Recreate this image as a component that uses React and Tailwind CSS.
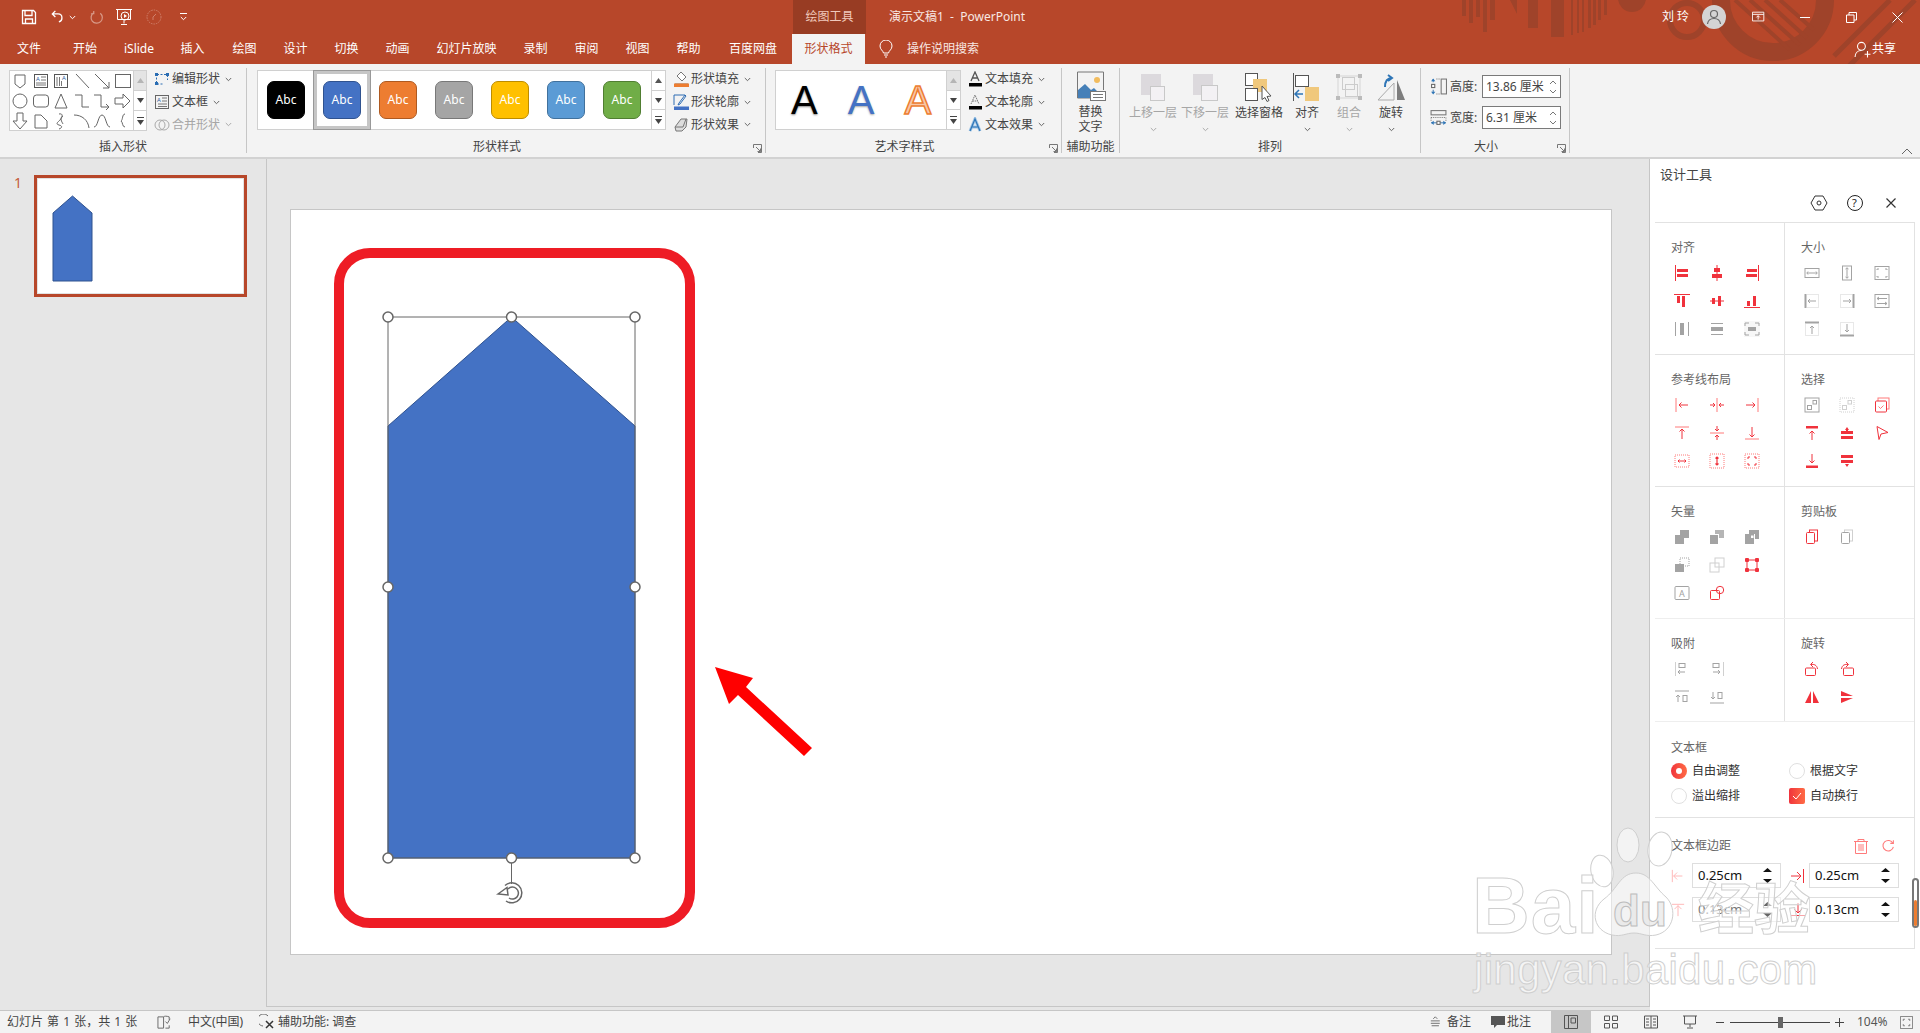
import React from 'react'

const RED = '#f0323c'
const PALE = '#ff7b7b'
const GRAY = '#a3a3a3'
const LIGHT = '#d0d0d0'

const TABS = [
  { t: '文件', w: 'w-[58px]' }, { t: '开始', w: 'w-[54px]' }, { t: 'iSlide', w: 'w-[54px]' },
  { t: '插入', w: 'w-[53px]' }, { t: '绘图', w: 'w-[51px]' }, { t: '设计', w: 'w-[51px]' },
  { t: '切换', w: 'w-[51px]' }, { t: '动画', w: 'w-[51px]' }, { t: '幻灯片放映', w: 'w-[87px]' },
  { t: '录制', w: 'w-[51px]' }, { t: '审阅', w: 'w-[51px]' }, { t: '视图', w: 'w-[51px]' },
  { t: '帮助', w: 'w-[51px]' }, { t: '百度网盘', w: 'w-[78px]' },
]

const SWATCHES = [
  'bg-[#000000] border-[#000000]', 'bg-[#4472c4] border-[#2f528f]', 'bg-[#ed7d31] border-[#ae5a21]',
  'bg-[#a5a5a5] border-[#787878]', 'bg-[#ffc000] border-[#bc8c00]', 'bg-[#5b9bd5] border-[#41719c]',
  'bg-[#70ad47] border-[#507e32]',
]

const Ico = ({ s = 16, h, vb, className = '', children, ...rest }) => (
  <svg width={s} height={h || s} viewBox={vb || '0 0 16 16'} fill="none" className={`shrink-0 ${className}`} {...rest}>{children}</svg>
)

const Chev = ({ c = '#666' }) => (
  <svg width="7" height="5" viewBox="0 0 7 5" fill="none" className="shrink-0"><path d="M.8 1l2.7 2.7L6.2 1" stroke={c} /></svg>
)

// small shapes in the insert-shape gallery
const GALLERY = [
  <path d="M4 3h10v9l-5 4-5-4z" />,
  <g><rect x="2.5" y="2.5" width="13" height="13" stroke="#555" /><text x="4" y="9" fontSize="6" fill="#2f5f9e" stroke="none">A</text><path d="M9 5h5M9 8h5M4 11h10M4 13h10" stroke="#777" /></g>,
  <g><rect x="2.5" y="2.5" width="13" height="13" stroke="#555" /><text x="10" y="8" fontSize="6" fill="#2f5f9e" stroke="none">A</text><path d="M5 5v9M7.500 5v9M9.500 9v5" stroke="#777" /></g>,
  <path d="M3 2l13 14" />,
  <path d="M2 2l14 14M16 10v6h-6" />,
  <rect x="1.500" y="2.500" width="15" height="13" />,
  <circle cx="9" cy="9" r="7" />,
  <rect x="1.500" y="3" width="15" height="12" rx="3" />,
  <path d="M9 2l6 14H3z" />,
  <path d="M2 3h7v12h7" />,
  <path d="M1 3h7v12h8M13 12l3 3-3 3" />,
  <path d="M1 6h8V2l7 7-7 7v-4H1z" />,
  <path d="M6 1h6v8h4l-7 8-7-8h4z" />,
  <path d="M3 3h6l6 6v7H3z" />,
  <path d="M7 2c5-1 3 4 1 6s-5 4-1 5 3 3 0 4M11 4c-4 2-1 6 0 8" />,
  <path d="M1 3c8 0 14 5 15 13" />,
  <path d="M1 15C5 15 5 3 9 3s4 12 8 12" />,
  <path d="M11 2C8 2 9 8 7 9c2 1 1 6 4 6" />,
]

const ScrollCol = ({ first = true }) => (
  <div className="w-[14px] flex flex-col border-l border-[#d0d0d0]">
    <div className={`flex-1 flex items-center justify-center ${first ? 'bg-[#e4e4e4]' : ''}`}>
      <svg width="7" height="5" viewBox="0 0 7 5"><path d="M3.500 0L7 5H0z" fill={first ? '#b5b5b5' : '#555'} /></svg>
    </div>
    <div className="flex-1 flex items-center justify-center border-t border-[#d0d0d0]">
      <svg width="7" height="5" viewBox="0 0 7 5"><path d="M0 0h7L3.500 5z" fill="#444" /></svg>
    </div>
    <div className="flex-1 flex flex-col gap-[2px] items-center justify-center border-t border-[#d0d0d0]">
      <div className="w-[7px] h-px bg-[#444]" />
      <svg width="7" height="5" viewBox="0 0 7 5"><path d="M0 0h7L3.500 5z" fill="#444" /></svg>
    </div>
  </div>
)

const SideBtn = ({ icon, label, off }) => (
  <div className={`flex-1 flex items-center ${off ? 'text-[#a6a6a6]' : 'text-[#444]'}`}>
    <div className="w-[18px] flex justify-center shrink-0">{icon}</div>
    <span className="ml-[1px] whitespace-nowrap">{label}</span>
    <span className="ml-[5px]"><Chev c={off ? '#aaa' : '#666'} /></span>
  </div>
)

const Group = ({ w, label, labelCls = '', launcher, children }) => (
  <div className={`relative h-full flex flex-col border-r border-[#c6c6c6] shrink-0 ${w}`}>
    <div className="h-[72px] shrink-0 flex">{children}</div>
    <div className={`h-[14px] shrink-0 leading-[14px] text-center text-[#444] whitespace-nowrap ${labelCls}`}>{label}</div>
    {launcher && (
      <svg width="9" height="9" viewBox="0 0 9 9" fill="none" className="absolute right-[3px] bottom-[0px]">
        <path d="M.5 4V.5H8.500V8.500H5M3 3l4.500 4.500M7.500 4.500v3h-3" stroke="#777" />
      </svg>
    )}
  </div>
)

const BigBtn = ({ w, icon, label, off, chev = true }) => (
  <div className={`flex flex-col items-center ${w} ${off ? 'text-[#a6a6a6]' : 'text-[#444]'}`}>
    <div className="h-[32px] mt-[3px] flex items-center justify-center">{icon}</div>
    <div className="h-[17px] mt-[1px] leading-[17px] whitespace-nowrap">{label}</div>
    {chev && <div className="mt-[6px]"><Chev c={off ? '#aaa' : '#666'} /></div>}
  </div>
)

const SizeRow = ({ icon, label, value }) => (
  <div className="h-[23px] flex items-center">
    <div className="w-[21px] ml-[7px] flex justify-center">{icon}</div>
    <span className="ml-[1px] w-[32px] text-[#444]">{label}</span>
    <div className="w-[79px] h-[23px] border border-[#7a7a7a] bg-white flex items-center justify-between pl-[3px] pr-[3px]">
      <span className="text-[#444] whitespace-nowrap">{value}</span>
      <svg width="8" height="16" viewBox="0 0 8 16" fill="none"><path d="M1 5l3-3 3 3M1 11l3 3 3-3" stroke="#777" /></svg>
    </div>
  </div>
)

const Line = ({ d, c, w = 1 }) => <path d={d} stroke={c} strokeWidth={w} />
const Box = ({ x, y, w, h, c, dash }) => <rect x={x} y={y} width={w} height={h} stroke={c} strokeDasharray={dash} />

const ALIGN = [
  <g><Line d="M1.500 0v16" c={RED} /><path d="M3 4h11v3H3zM3 9h11v3H3z" fill={RED} /></g>,
  <g><Line d="M8 0v16" c={RED} /><path d="M5 3h6v4H5zM3 9h10v4H3z" fill={RED} /></g>,
  <g><Line d="M14.500 0v16" c={RED} /><path d="M3 4h10v3H3zM2 9h11v3H2z" fill={RED} /></g>,
  <g><Line d="M0 1.500h16" c={RED} /><path d="M3 3h3v7H3zM8 3h3v11H8z" fill={RED} /></g>,
  <g><Line d="M1 8h14" c={RED} /><path d="M3 5h3v6H3zM9 3h3v10H9z" fill={RED} /></g>,
  <g><Line d="M0 14.500h16" c={RED} /><path d="M3 8h3v5H3zM9 3h3v10H9z" fill={RED} /></g>,
  <g><Line d="M1.500 1v14M14.500 1v14" c={GRAY} /><path d="M6 2h4v12H6z" fill={GRAY} /></g>,
  <g><Line d="M2 2.500h12M2 13.500h12" c={GRAY} /><path d="M2 6h12v4H2z" fill={GRAY} /></g>,
  <g><rect x="-3" y="-3" width="22" height="22" rx="2" fill="#f7f7f7" /><path d="M1 5V2h4M11 2h4v3M1 11v3h4M11 14h4v-3" stroke={GRAY} /><path d="M4 6h8v4H4z" fill={GRAY} /></g>,
]
const SIZE = [
  <g><Box x="1" y="3.500" w="14" h="9" c={GRAY} /><Line d="M3 8h10M4 6.500L2.800 8 4 9.500M12 6.500L13.200 8 12 9.500" c={GRAY} /></g>,
  <g><Box x="3.500" y="1" w="9" h="14" c={GRAY} /><Line d="M8 3v10M6.500 4L8 2.800 9.500 4M6.500 12L8 13.200 9.500 12" c={GRAY} /></g>,
  <g><Box x="1" y="1.500" w="14" h="13" c={GRAY} /><Line d="M3 5V4h2M11 4h2v1M3 11v1h2M11 12h2v-1" c={GRAY} /></g>,
  <g><Line d="M1.500 1v14" c={GRAY} w="2" /><Box x="2.500" y="1.500" w="12" h="13" c={LIGHT} dash="1 1" /><Line d="M4 8h8M6 6L4 8l2 2" c={GRAY} /></g>,
  <g><Line d="M14.500 1v14" c={GRAY} w="2" /><Box x="1.500" y="1.500" w="12" h="13" c={LIGHT} dash="1 1" /><Line d="M4 8h8M10 6l2 2-2 2" c={GRAY} /></g>,
  <g><Box x="1" y="1.500" w="14" h="13" c={GRAY} /><Line d="M3 5.500h10M3 10.500h10M5 4L3 5.500 5 7M11 9l2 1.500L11 12" c={GRAY} /></g>,
  <g><Line d="M1 1.500h14" c={GRAY} w="2" /><Box x="1.500" y="2.500" w="13" h="12" c={LIGHT} dash="1 1" /><Line d="M8 13V5M6 7l2-2 2 2" c={GRAY} /></g>,
  <g><Line d="M1 14.500h14" c={GRAY} w="2" /><Box x="1.500" y="1.500" w="13" h="12" c={LIGHT} dash="1 1" /><Line d="M8 3v8M6 9l2 2 2-2" c={GRAY} /></g>,
]
const GUIDE = [
  <g><Line d="M2 1v14" c={PALE} /><Line d="M5 8h9M7.500 5.500L5 8l2.500 2.500" c={RED} /></g>,
  <g><Line d="M8 1v14" c={PALE} /><Line d="M1 8h5M4 6l2 2-2 2M15 8h-5M12 6l-2 2 2 2" c={RED} /></g>,
  <g><Line d="M14 1v14" c={PALE} /><Line d="M2 8h9M8.500 5.500L11 8l-2.500 2.500" c={RED} /></g>,
  <g><Line d="M1 2h14" c={PALE} /><Line d="M8 4v10M5.500 6.500L8 4l2.500 2.500" c={RED} /></g>,
  <g><Line d="M1 8h14" c={PALE} /><Line d="M8 1v5M6 4l2 2 2-2M8 15v-5M6 12l2-2 2 2" c={RED} /></g>,
  <g><Line d="M1 14h14" c={PALE} /><Line d="M8 2v10M5.500 9.500L8 12l2.500-2.500" c={RED} /></g>,
  <g><Box x="1" y="2" w="14" h="12" c={PALE} dash="1 1" /><Line d="M4 8h8M5.500 6.500L4 8l1.500 1.500M10.500 6.500L12 8l-1.500 1.500" c={RED} /></g>,
  <g><Box x="1" y="1" w="14" h="14" c={PALE} dash="1 1" /><Line d="M8 4v8M6.500 5.500L8 4l1.500 1.500M6.500 10.500L8 12l1.500-1.500" c={RED} w="1.200" /></g>,
  <g><Box x="1" y="1" w="14" h="14" c={PALE} dash="1 1" /><Line d="M4 6V4h2M10 4h2v2M4 10v2h2M10 12h2v-2" c={RED} /></g>,
]
const SELECT = [
  <g><Box x="1" y="1" w="14" h="14" c={GRAY} /><Box x="3.500" y="8.500" w="4" h="4" c={GRAY} /><Box x="9" y="3.500" w="3.500" h="3.500" c={GRAY} /></g>,
  <g><Box x="1" y="1" w="14" h="14" c={LIGHT} dash="1 1" /><Box x="3.500" y="8.500" w="4" h="4" c={LIGHT} /><Box x="9" y="3.500" w="3.500" h="3.500" c={LIGHT} /></g>,
  <g><Box x="4" y="1" w="11" h="11" c={PALE} /><rect x="1.500" y="4" width="11" height="11" rx="1" fill="#fff" stroke={RED} /><Line d="M4.500 9.500l2 2 3-3" c={PALE} /></g>,
  <g><path d="M2 1h12v2.500H2z" fill={RED} /><Line d="M8 15V6M5.500 8.500L8 6l2.500 2.500" c={RED} /></g>,
  <g><path d="M2 6h12v3H2zM2 11h12v3H2z" fill={RED} /><path d="M6 5l2-3 2 3z" fill={RED} /><path d="M7 4h2v3H7z" fill={RED} /></g>,
  <path d="M3 1.500L14 7.500 7 9 5 14.500z" stroke={RED} />,
  <g><path d="M2 12.500h12V15H2z" fill={RED} /><Line d="M8 1v9M5.500 7.500L8 10l2.500-2.500" c={RED} /></g>,
  <g><path d="M2 2h12v3H2zM2 7h12v3H2z" fill={RED} /><path d="M6 11h4l-2 3z" fill={RED} /></g>,
]
const VECTOR = [
  <path d="M6 1h9v8h-5v6H1V6h5z" fill={GRAY} />,
  <g><path d="M1 6h8v9H1z" fill={GRAY} /><path d="M6 1h9v8H10V5H6z" fill="#b5b5b5" /></g>,
  <g><path d="M1 5h9v10H1z" fill={GRAY} /><path d="M5 1h10v9H11V5H5z" fill={GRAY} /><rect x="7" y="6.500" width="2.500" height="2.500" fill="#fff" /></g>,
  <g><path d="M1 7h9v8H1z" fill={GRAY} /><Box x="6" y="1" w="9" h="8" c={GRAY} dash="1 1" /></g>,
  <g><Box x="1" y="6" w="9" h="9" c={LIGHT} /><Box x="6" y="1" w="9" h="9" c={LIGHT} /></g>,
  <g><Box x="3" y="3" w="10" h="10" c={RED} />{[[3, 3], [13, 3], [3, 13], [13, 13]].map(([x, y]) => <rect key={x + '' + y} x={x - 2} y={y - 2} width="4" height="4" rx="1" fill={RED} />)}</g>,
  <g><rect x="1" y="1.500" width="14" height="13" rx="1" stroke={GRAY} /><text x="5" y="11.500" fontSize="9" fill={GRAY}>A</text></g>,
  <g><rect x="1.500" y="5.500" width="9" height="9" rx="1" stroke={RED} fill="#fff" /><circle cx="11" cy="5" r="3.700" stroke={RED} /></g>,
]
const CLIP = [
  <g><Box x="5.500" y="1" w="8" h="11" c={RED} /><rect x="2.500" y="3.500" width="8" height="11" rx="1" fill="#fff" stroke={RED} /></g>,
  <g><Box x="5.500" y="1" w="8" h="11" c={LIGHT} /><rect x="2.500" y="3.500" width="8" height="11" rx="1" fill="#fff" stroke={GRAY} /></g>,
]
const SNAP = [
  <g><Line d="M1.500 1v14" c={LIGHT} /><Box x="5" y="2.500" w="6" h="4" c={GRAY} /><Line d="M4 11h7M6 9l-2 2 2 2" c={GRAY} /></g>,
  <g><Line d="M14.500 1v14" c={LIGHT} /><Box x="4" y="2.500" w="6" h="4" c={GRAY} /><Line d="M4 11h7M9 9l2 2-2 2" c={GRAY} /></g>,
  null,
  <g><Line d="M1 2h14" c={GRAY} /><Line d="M4 13V6M2 8l2-2 2 2" c={GRAY} /><Box x="9" y="6.500" w="4" h="6" c={GRAY} /></g>,
  <g><Line d="M1 14h14" c={GRAY} /><Line d="M4 3v7M2 8l2 2 2-2" c={GRAY} /><Box x="9" y="3.500" w="4" h="6" c={GRAY} /></g>,
]
const ROTATE = [
  <g><rect x="1.500" y="7" width="10" height="7.500" rx="1" stroke={RED} /><Line d="M13.500 8C13 4 10 3 7 3.500M9 1L6.500 3.500 9 6" c={RED} /></g>,
  <g><rect x="4.500" y="7" width="10" height="7.500" rx="1" stroke={RED} /><Line d="M2.500 8C3 4 6 3 9 3.500M7 1l2.500 2.500L7 6" c={RED} /></g>,
  null,
  <path d="M7 2v12H1zM9 2v12h6z" fill={RED} />,
  <path d="M2 2l12 5H2zM2 9h12L2 14z" fill={RED} />,
]

const IconGrid = ({ items }) => (
  <div className="grid grid-cols-[35px_35px_35px] auto-rows-[28px] mt-[3px] ml-[9.500px]">
    {items.map((it, i) => (
      <div key={i} className="flex items-center justify-center">{it && <Ico>{it}</Ico>}</div>
    ))}
  </div>
)

const Section = ({ title, items, right }) => (
  <div className={`h-full ${right ? '' : 'border-r border-[#e2e2e2]'}`}>
    <div className="pt-[17px] pl-[16px] h-[33px] leading-[16px] text-[#666]">{title}</div>
    <IconGrid items={items} />
  </div>
)

const Radio = ({ on, label }) => (
  <div className="flex items-center h-[25px]">
    {on ? (
      <div className="w-[16px] h-[16px] rounded-full bg-gradient-to-r from-[#f0323c] to-[#ff6a45] flex items-center justify-center"><div className="w-[6px] h-[6px] rounded-full bg-white" /></div>
    ) : <div className="w-[16px] h-[16px] rounded-full border border-[#e0e0e0] bg-white" />}
    <span className="ml-[5px] text-[#333] whitespace-nowrap">{label}</span>
  </div>
)

const Spin = ({ value, faded }) => (
  <div className="h-[25px] border border-[#dedede] flex items-center justify-between pl-[5px] pr-[8px]">
    <span className={`text-[13px] ${faded ? 'text-[#777]' : 'text-[#111]'}`}>{value}</span>
    <svg width="9" height="15" viewBox="0 0 9 15"><path d="M4.500 0L9 4H0zM0 11h9l-4.500 4z" fill={faded ? '#666' : '#111'} /></svg>
  </div>
)

const Cell = ({ w, children, className = '' }) => (
  <div className={`h-full flex items-center justify-center shrink-0 ${w} ${className}`}>{children}</div>
)

const TitleDecor = () => {
  const bars = [[1462, 4, 16], [1469, 4, 23], [1476, 4, 17], [1483, 4, 32], [1490, 5, 20], [1528, 10, 28], [1551, 13, 37], [1571, 2, 35], [1577, 2, 33], [1582, 2, 32], [1588, 3, 28], [1593, 3, 25], [1598, 3, 20], [1604, 3, 15]]
  return (
    <svg width="480" height="64" viewBox="1440 0 480 64" className="absolute top-0 right-0">
      <g fill="#9f432a">
        {bars.map(([x, w, h]) => <rect key={x} x={x} y="0" width={w} height={h} />)}
        <path d="M1510 0h7v14z" />
        <circle cx="1632" cy="-2" r="14" />
      </g>
      <g fill="none" stroke="#9f432a">
        <circle cx="1687" cy="20" r="17" strokeWidth="6" />
        <circle cx="1773" cy="0" r="52" strokeWidth="18" />
        <path d="M1735 0l55 50M1750 0l50 45M1765 0l42 38M1780 0l34 30" strokeWidth="4" />
        <path d="M1890 0l-56 56M1915 0l-66 66" strokeWidth="5" />
      </g>
    </svg>
  )
}

const QuickAccess = () => (
  <div className="w-[793px] shrink-0 flex items-center h-full pl-[21px]">
    <Ico><path d="M1.500 1.500h11l2 2v11h-13zM4 1.500v5h7v-5M4.500 14.500V10h7v4.500" stroke="#fff" strokeWidth="1.300" /></Ico>
    <Ico className="ml-[14px]" s={14}><path d="M5 1L1.500 4.500 5 8M2 4.500h6c3.500 0 4.500 2.500 4.500 4.500s-1.500 4-3.500 4.500" stroke="#fff" strokeWidth="1.500" /></Ico>
    <span className="ml-[4px]"><Chev c="#fff" /></span>
    <Ico className="ml-[14px]" s={15}><path d="M11 3.500A6 6 0 1 1 4 3M4 1v3H1" stroke="#d89a88" strokeWidth="1.300" /></Ico>
    <Ico className="ml-[10px]" s={18} vb="0 0 18 18"><path d="M1 1.500h16M2.500 1.500v10h13v-10M9 11.500v4M6 16.500h6" stroke="#fff" /><circle cx="10" cy="8" r="4" stroke="#fff" /><path d="M9 6l3 2-3 2z" fill="#fff" /></Ico>
    <Ico className="ml-[13px]" s={16}><circle cx="8" cy="8" r="7" stroke="#d0806b" strokeDasharray="1.500 1" /><path d="M10 5L7 8v3" stroke="#d0806b" /></Ico>
    <span className="ml-[18px] flex flex-col items-center gap-[2px]"><span className="block w-[7px] h-px bg-white" /><Chev c="#fff" /></span>
  </div>
)

const RibbonTop = () => (
  <div className="relative h-[64px] shrink-0 bg-[#b7472a] text-white">
    <TitleDecor />
    <div className="relative h-[34px] flex items-center">
      <QuickAccess />
      <div className="w-[73px] h-full bg-[#983c23] flex items-center justify-center text-[#f0c9bc]">绘图工具</div>
      <div className="ml-[23px] whitespace-pre text-[#f8e8e3]">演示文稿1  -  PowerPoint</div>
      <div className="ml-auto h-full flex items-center">
        <span className="w-[31px] tracking-[3px] whitespace-nowrap">刘玲</span>
        <div className="ml-[9px] w-[24px] h-[24px] rounded-full bg-[#d4d4d4] flex items-center justify-center">
          <Ico s={16}><circle cx="8" cy="5" r="3.500" stroke="#666" strokeWidth="1.200" /><path d="M1.500 15c.5-4 3-5.500 6.500-5.500s6 1.500 6.500 5.500" stroke="#666" strokeWidth="1.200" /></Ico>
        </div>
        <Cell w="w-[46px] ml-[10px]"><Ico s={14}><path d="M.5 2.500h13v10H.5zM.5 5h13M7 11V6.500M5 8.500l2-2 2 2" stroke="#fff" /></Ico></Cell>
        <Cell w="w-[46px]"><div className="w-[10px] h-px bg-white" /></Cell>
        <Cell w="w-[46px]"><Ico s={11} vb="0 0 11 11"><path d="M.5 3h7.500v7.500H.5zM3 3V.5h7.500V8H8" stroke="#fff" /></Ico></Cell>
        <Cell w="w-[46px]"><Ico s={11} vb="0 0 11 11"><path d="M.5.5l10 10M10.500.5l-10 10" stroke="#fff" /></Ico></Cell>
      </div>
    </div>
    <div className="relative h-[30px] flex items-stretch">
      {TABS.map((t) => <div key={t.t} className={`${t.w} flex items-center justify-center whitespace-nowrap`}>{t.t}</div>)}
      <div className="w-[73px] bg-[#f3f3f3] text-[#b7472a] flex items-center justify-center">形状格式</div>
      <div className="ml-[14px] flex items-center">
        <Ico s={14} h={18} vb="0 0 14 18"><path d="M4.500 13C4 10.500 1 9.500 1 6a6 6 0 0 1 12 0c0 3.500-3 4.500-3.500 7zM5 15h4M6 17h2" stroke="#fff" /></Ico>
        <span className="ml-[14px] text-[#f8e8e3]">操作说明搜索</span>
      </div>
      <div className="ml-auto mr-[24px] flex items-center">
        <Ico s={17}><circle cx="7" cy="5" r="3.700" stroke="#fff" /><path d="M1 15c0-3.500 2.500-6 6-6M10 12.500h5.500M12.700 9.500v6" stroke="#fff" /></Ico>
        <span className="ml-[1px]">共享</span>
      </div>
    </div>
  </div>
)

const Ribbon = () => (
  <div className="relative h-[95px] shrink-0 bg-[#f3f3f3] border-b-2 border-[#d2d2d2] py-[4px] flex">
    <Group w="w-[247px]" label="插入形状">
      <div className="ml-[9px] mt-[2px] w-[138px] h-[61px] bg-white border border-[#d0d0d0] flex">
        <div className="grid grid-cols-[20.500px_20.500px_20.500px_20.500px_20.500px_20.500px] auto-rows-[20px] w-[124px]">
          {GALLERY.map((g, i) => (
            <div key={i} className="flex items-center justify-center">
              <Ico s={18} vb="0 0 18 18" stroke="#666">{g}</Ico>
            </div>
          ))}
        </div>
        <ScrollCol />
      </div>
      <div className="ml-[6px] h-[68px] flex flex-col">
        <SideBtn label="编辑形状" icon={<Ico><path d="M3 3.500h10M3 13h6M2.500 3v10M13.500 4v5" stroke="#2a6db3" strokeDasharray="2 1.500" /><rect x="1" y="2" width="3" height="3" fill="#2a6db3" /><rect x="12" y="2" width="3" height="3" fill="#2a6db3" /><rect x="1" y="11" width="3" height="3" fill="#2a6db3" /></Ico>} />
        <SideBtn label="文本框" icon={<Ico><rect x="1.500" y="1.500" width="13" height="13" stroke="#666" /><text x="3" y="8" fontSize="6" fill="#2f5f9e">A</text><path d="M8 4h5M8 7h5M4 10h9M4 12.500h9" stroke="#777" /></Ico>} />
        <SideBtn off label="合并形状" icon={<Ico><circle cx="6" cy="8" r="5" stroke="#aaa" /><circle cx="10" cy="8" r="5" stroke="#aaa" /></Ico>} />
      </div>
    </Group>

    <Group w="w-[519px]" label="形状样式" labelCls="pr-[18px]" launcher>
      <div className="ml-[10px] mt-[2px] w-[409px] h-[60px] bg-white border border-[#d0d0d0] flex">
        {SWATCHES.map((s, i) => (
          <div key={s} className={`w-[56px] h-full flex items-center justify-center ${i === 1 ? 'border-[3px] border-[#c6c6c6] shadow-[0_0_0_1px_#999]' : ''}`}>
            <div className={`w-[38px] h-[38px] rounded-[7px] border flex items-center justify-center text-white ${s}`}>Abc</div>
          </div>
        ))}
        <div className="w-[1px]" />
        <ScrollCol first={false} />
      </div>
      <div className="ml-[6px] h-[68px] flex flex-col">
        <SideBtn label="形状填充" icon={<Ico><path d="M8 1l5 5-4 4-5-5zM2 13h13v3H2z" fill="#fff" stroke="#777" /><path d="M1 12.500h15V16H1z" fill="#ed7d31" /></Ico>} />
        <SideBtn label="形状轮廓" icon={<Ico><path d="M1 1h11M1 1v10M13 2l-6 8-2 1 1-2 6-8z" stroke="#2f6db3" /><path d="M1 12.500h15V16H1z" fill="#4472c4" /></Ico>} />
        <SideBtn label="形状效果" icon={<Ico><path d="M2 10l6-8h6l-1 8-4 4H3z" fill="#ddd" stroke="#777" /><path d="M2 10h8l3-8" stroke="#777" /></Ico>} />
      </div>
    </Group>

    <Group w="w-[296px]" label="艺术字样式" labelCls="pr-[18px]" launcher>
      <div className="ml-[9px] mt-[2px] w-[186px] h-[60px] bg-white border border-[#d0d0d0] flex">
        {[
          'text-black [text-shadow:0_1px_2px_#888]',
          'text-[#4472c4] [text-shadow:0_1px_2px_#aaa]',
          'text-[#f8c7a8] [-webkit-text-stroke:1.500px_#ed7d31]',
        ].map((c) => (
          <div key={c} className={`w-[57px] flex items-center justify-center text-[40px] leading-none [font-family:'Liberation_Sans',sans-serif] ${c}`}>A</div>
        ))}
        <ScrollCol />
      </div>
      <div className="ml-[5px] h-[68px] flex flex-col">
        <SideBtn label="文本填充" icon={<Ico><path d="M4 10l4-9 4 9M5.500 7h5" stroke="#555" strokeWidth="1.300" /><path d="M2 12h13v3.500H2z" fill="#000" /></Ico>} />
        <SideBtn label="文本轮廓" icon={<Ico><path d="M4 10l4-9 4 9M5.500 7h5" stroke="#777" strokeDasharray="1.500 .7" /><path d="M2 12h13v3.500H2z" fill="#000" /></Ico>} />
        <SideBtn label="文本效果" icon={<Ico><path d="M3 14L8 2l5 12M5 10h6" stroke="#9dc3e6" strokeWidth="3" /><path d="M3 14L8 2l5 12M5 10h6" stroke="#2e75b6" strokeWidth="1.200" /></Ico>} />
      </div>
    </Group>

    <Group w="w-[58px]" label="辅助功能">
      <div className="w-full flex flex-col items-center text-[#444]">
        <Ico s={30} vb="0 0 30 30" className="mt-[3px]">
          <path d="M1.500 1h26v18" stroke="#777" />
          <path d="M1.500 1v26h13" stroke="#777" />
          <circle cx="21" cy="9" r="3" fill="#f2bc5e" />
          <path d="M2 27V19l7-6 6 6 3-2 3 3v1h-7v6z" fill="#4680b8" />
          <rect x="14.500" y="20.500" width="15" height="9" fill="#fff" stroke="#777" />
          <path d="M17 23.500h10M17 26.500h10" stroke="#777" />
        </Ico>
        <div className="mt-[3px] leading-[15px] text-center">替换<br />文字</div>
      </div>
    </Group>

    <Group w="w-[301px]" label="排列">
      <div className="flex pl-[7px]">
        <BigBtn off w="w-[52px]" label="上移一层" icon={<Ico s={28} vb="0 0 28 28"><rect x="2" y="1" width="20" height="21" fill="#dcd9dd" /><rect x="11.500" y="13.500" width="14" height="14" fill="#f3f1f4" stroke="#c8c8c8" /></Ico>} />
        <BigBtn off w="w-[52px]" label="下移一层" icon={<Ico s={28} vb="0 0 28 28"><rect x="2" y="1" width="20" height="21" fill="#dcd9dd" /><rect x="10.500" y="12.500" width="16" height="15" fill="#f3f1f4" stroke="#c8c8c8" /></Ico>} />
        <BigBtn w="w-[56px]" label="选择窗格" chev={false} icon={<Ico s={30} vb="0 0 30 30"><rect x="1.500" y="1.500" width="12" height="12" fill="#fff" stroke="#555" /><rect x="9" y="7" width="14" height="13" fill="#f0c87c" /><rect x="1.500" y="16.500" width="12" height="12" fill="#fff" stroke="#555" /><path d="M18 14l9 10-4 .5 2 4-2 1-2-4-3 2z" fill="#fff" stroke="#555" /></Ico>} />
        <BigBtn w="w-[40px]" label="对齐" icon={<Ico s={30} vb="0 0 30 30"><path d="M1.500 1v28" stroke="#555" /><rect x="3.500" y="3.500" width="13" height="11" fill="#fff" stroke="#555" /><rect x="13" y="15" width="14" height="14" fill="#f0c87c" /><path d="M11 22H3M7 18l-4 4 4 4" stroke="#2e75b6" strokeWidth="1.500" /></Ico>} />
        <BigBtn off w="w-[44px]" label="组合" icon={<Ico s={28} vb="0 0 28 28"><rect x="3" y="3" width="22" height="22" stroke="#d5d5d5" /><rect x="7.500" y="4.500" width="12" height="12" stroke="#ccc" /><rect x="10.500" y="11.500" width="12" height="12" stroke="#ccc" /><path d="M1 1h4v4H1zM23 1h4v4h-4zM1 23h4v4H1zM23 23h4v4h-4z" fill="#bbb" /></Ico>} />
        <BigBtn w="w-[40px]" label="旋转" icon={<Ico s={30} vb="0 0 30 30"><path d="M2 28L18 11v17z" fill="#f3f3f3" stroke="#aaa" /><path d="M21 8l8 20h-8z" fill="#7d7d7d" /><path d="M9 15c0-6 2-9 7-9M12 3l4 3-4 3" stroke="#2e75b6" strokeWidth="2" /></Ico>} />
      </div>
    </Group>

    <Group w="w-[149px]" label="大小" labelCls="pr-[18px]" launcher>
      <div className="flex flex-col gap-[8px] pt-[7px]">
        <SizeRow label="高度:" value="13.86 厘米" icon={<Ico s={17}><rect x="10.500" y="1" width="5" height="14" stroke="#777" /><path d="M3 1v14" stroke="#4680b8" strokeDasharray="3 2" /><path d="M1 3l2-2.500L5 3zM1 13l2 2.500L5 13z" fill="#2e75b6" /><rect x="1.500" y="6" width="3" height="3" fill="#fff" stroke="#666" /><path d="M6 1h3M6 15h3" stroke="#777" strokeDasharray="1 1" /></Ico>} />
        <SizeRow label="宽度:" value="6.31 厘米" icon={<Ico s={17}><rect x="1" y="1.500" width="14" height="4" stroke="#777" /><path d="M1 8h14M1 8v3M15 8v3" stroke="#777" strokeDasharray="1 1" /><path d="M1 13h14" stroke="#4680b8" /><path d="M3.500 11L1 13l2.500 2zM12.500 11L15 13l-2.500 2z" fill="#2e75b6" /><rect x="6.500" y="11.500" width="3" height="3" fill="#fff" stroke="#666" /></Ico>} />
      </div>
    </Group>

    <svg width="12" height="7" viewBox="0 0 12 7" fill="none" className="absolute right-[7px] bottom-[2px]"><path d="M1 6l5-5 5 5" stroke="#666" /></svg>
  </div>
)

const Thumbnails = () => (
  <div className="w-[267px] shrink-0 border-r border-[#c6c6c6] pt-[16px] pl-[14px] flex mb-[3px]">
    <div className="w-[20px] text-sm leading-[16px] text-[#c55a3a]">1</div>
    <div className="w-[213px] h-[122px] border-[3px] border-[#b7472a] bg-white shadow-[inset_0_0_0_1px_#e2e2e2]">
      <svg viewBox="37 178 207 116" className="w-full h-full">
        <path d="M53 213L72.500 196 92 213V281H53z" fill="#4472c4" stroke="#2f528f" />
      </svg>
    </div>
  </div>
)

const Slide = () => (
  <div className="flex-1 border-r border-b border-[#c6c6c6] mb-[3px] pt-[50px] pl-[23px]">
    <div className="w-[1322px] h-[746px] bg-white border border-[#c6c6c6]">
      <svg viewBox="291 210 1320 744" className="w-full h-full">
        <path d="M388 426L511.500 317 635 426V858H388z" fill="#4472c4" stroke="#2f528f" />
        <path d="M388 858V317H635V858H388" fill="none" stroke="#666" />
        <path d="M511.500 858V884" stroke="#666" />
        {[[388, 317], [511.5, 317], [635, 317], [388, 587], [635, 587], [388, 858], [511.5, 858], [635, 858]].map(([x, y]) => (
          <circle key={x + '-' + y} cx={x} cy={y} r="5" fill="#fff" stroke="#666" strokeWidth="1.500" />
        ))}
        <g fill="none" stroke="#666" strokeWidth="1.500">
          <path d="M505 885.500A10 10 0 1 1 506 901" />
          <path d="M508 889A6 6 0 1 1 509 898" />
          <path d="M498 894L507 887.500 508 895z" fill="#fff" />
        </g>
        <rect x="339" y="253" width="351" height="670" rx="31" fill="none" stroke="#ee1c25" strokeWidth="10" />
        <path d="M715 667L753 678 746 687 812 748 804 756 738 695 729 704z" fill="#ff0000" />
      </svg>
    </div>
  </div>
)

const DesignPanel = () => (
  <div className="relative w-[270px] shrink-0 bg-white">
    <div className="h-[32px] pl-[10px] flex items-center text-[#444] text-[13px]">设计工具</div>
    <div className="h-[31px] flex items-start justify-end pr-[20px] pt-[3px]">
      <Ico s={18} vb="0 0 18 18"><path d="M5 2h8l4 7-4 7H5L1 9z" stroke="#333" /><circle cx="9" cy="9" r="2" stroke="#333" /></Ico>
      <svg width="18" height="18" viewBox="0 0 18 18" fill="none" className="ml-[18px]"><circle cx="9" cy="9" r="7.500" stroke="#222" /><text x="6" y="13" fontSize="11" fill="#222">?</text></svg>
      <Ico s={18} vb="0 0 18 18" className="ml-[18px]"><path d="M4.500 4.500l9 9M13.500 4.500l-9 9" stroke="#333" strokeWidth="1.200" /></Ico>
    </div>
    <div className="ml-[5px] w-[260px] border-r border-[#e2e2e2]">
      <div className="grid grid-cols-[130px_1fr] h-[132px] border-t border-[#e2e2e2]">
        <Section title="对齐" items={ALIGN} />
        <Section right title="大小" items={SIZE} />
      </div>
      <div className="grid grid-cols-[130px_1fr] h-[132px] border-t border-[#e2e2e2]">
        <Section title="参考线布局" items={GUIDE} />
        <Section right title="选择" items={SELECT} />
      </div>
      <div className="grid grid-cols-[130px_1fr] h-[132px] border-t border-[#e2e2e2]">
        <Section title="矢量" items={VECTOR} />
        <Section right title="剪贴板" items={CLIP} />
      </div>
      <div className="grid grid-cols-[130px_1fr] h-[103px] border-t border-[#eeeeee]">
        <Section title="吸附" items={SNAP} />
        <Section right title="旋转" items={ROTATE} />
      </div>
      <div className="h-[96px] border-t border-[#eeeeee] pl-[16px]">
        <div className="pt-[18px] h-[34px] leading-[16px] text-[#666]">文本框</div>
        <div className="grid grid-cols-[118px_1fr] mt-[2px]">
          <Radio on label="自由调整" />
          <Radio label="根据文字" />
          <Radio label="溢出缩排" />
          <div className="flex items-center h-[25px]">
            <div className="w-[16px] h-[16px] rounded-[2px] bg-gradient-to-r from-[#f0323c] to-[#ff6a45] flex items-center justify-center">
              <svg width="10" height="8" viewBox="0 0 10 8" fill="none"><path d="M1 4l3 3 5-6" stroke="#fff" /></svg>
            </div>
            <span className="ml-[5px] text-[#333] whitespace-nowrap">自动换行</span>
          </div>
        </div>
      </div>
      <div className="h-[132px] border-t border-b border-[#e2e2e2] pl-[16px]">
        <div className="h-[36px] pt-[20px] flex items-center text-[#666]">
          <span>文本框边距</span>
          <Ico s={16} className="ml-[122px]"><path d="M1 3.500h14M5 3.500V1.500h6v2M2.500 3.500v12h11v-12M6 6v7M8 6v7M10 6v7" stroke={PALE} /></Ico>
          <Ico s={14} className="ml-[13px]"><path d="M12.500 5A6 6 0 1 0 13 9M13 1.500V5H9.500" stroke={PALE} strokeWidth="1.200" /></Ico>
        </div>
        <div className="mt-[9px] grid grid-cols-[21px_89px_28px_90px] gap-y-[9px] items-center">
          <Ico s={14}><path d="M1.500 1v14M13 8H3M7 4L3 8l4 4" stroke="#ffb0b0" /></Ico>
          <Spin value="0.25cm" />
          <Ico s={16} className="ml-[9px]"><path d="M13.500 1v14M1 8h10M7 4l4 4-4 4" stroke={RED} /></Ico>
          <Spin value="0.25cm" />
          <Ico s={14}><path d="M1 1.500h14M8 15V3M4 7l4-4 4 4" stroke="#ffb0b0" /></Ico>
          <Spin faded value="0.13cm" />
          <Ico s={16} className="ml-[9px]"><path d="M1 13.500h14M8 1v10M4 7l4 4 4-4" stroke={RED} /></Ico>
          <Spin value="0.13cm" />
        </div>
      </div>
    </div>
    <div className="absolute left-[262px] top-[719px] w-[7px] h-[50px] rounded-full border-2 border-[#777] bg-white flex flex-col justify-end">
      <div className="h-[26px] rounded-full bg-[#ed7d31]" />
    </div>
  </div>
)

const Watermark = () => (
  <div className="absolute left-[1470px] top-[820px] w-[450px] h-[175px] pointer-events-none [font-family:'Liberation_Sans',sans-serif] text-white/55 [-webkit-text-stroke:1px_#cfcfcf]">
    <svg width="105" height="120" viewBox="0 0 105 120" className="absolute left-[120px] top-[5px]" fill="#ffffff" fillOpacity="0.5" stroke="#cfcfcf">
      <ellipse cx="12" cy="46" rx="11" ry="16" transform="rotate(-12 12 46)" />
      <ellipse cx="38" cy="20" rx="11" ry="17" />
      <ellipse cx="70" cy="24" rx="12" ry="17" transform="rotate(10 70 24)" />
      <path d="M46 48c14 0 18 14 30 24 12 12 8 34-10 38-10 2-14-2-22-2s-12 4-22 2C4 106-1 86 14 74c14-10 16-26 32-26z" />
    </svg>
    <div className="absolute left-[2px] top-[41px] text-[80px] font-bold leading-[90px] tracking-[1px] whitespace-nowrap">Bai</div>
    <div className="absolute left-[143px] top-[61px] text-[44px] font-bold leading-[60px] text-[#e4e4e4]/60 [-webkit-text-stroke:1px_#bdbdbd] whitespace-nowrap">du</div>
    <div className="absolute left-[228px] top-[50px] text-[56px] font-bold leading-[70px] [font-family:'Noto_Sans_CJK_SC',sans-serif] whitespace-nowrap">经验</div>
    <div className="absolute left-[4px] top-[120px] text-[42px] leading-[60px] tracking-[.3px] whitespace-nowrap">jingyan.baidu.com</div>
  </div>
)

const StatusBar = () => (
  <div className="h-[23px] shrink-0 bg-[#f3f3f3] border-t border-[#c6c6c6] flex items-center text-[#444] whitespace-nowrap">
    <span className="ml-[7px] w-[150px] [word-spacing:1px]">幻灯片 第 1 张，共 1 张</span>
    <Ico s={15}><path d="M7 2H1v12h6V2c1-1 3-1 6 0v3M9 14h4v-3M9 7l2 2 3-5" stroke="#666" /></Ico>
    <span className="ml-[16px] w-[71px]">中文(中国)</span>
    <Ico s={16}><path d="M9 2A6 6 0 1 0 4 12" stroke="#666" /><path d="M7 7l7 7M14 7l-7 7" stroke="#333" strokeWidth="1.500" /></Ico>
    <span className="ml-[3px]">辅助功能: 调查</span>
    <div className="ml-auto h-full flex items-center">
      <Ico s={13}><path d="M1 6h11M1 9h11M2 12h9M4 3.500L6.500 1 9 3.500" stroke="#555" /></Ico>
      <span className="ml-[4px] w-[43px]">备注</span>
      <Ico s={16}><path d="M1 2h14v9H7l-3 3v-3H1z" fill="#555" /></Ico>
      <span className="ml-[1px] w-[44px]">批注</span>
      <Cell w="w-[40px]" className="bg-[#c6c6c6]"><Ico><path d="M1.500 1.500h13v13h-13zM5.500 1.500v13M8 4h4.500v5H8z" stroke="#555" /></Ico></Cell>
      <Cell w="w-[40px]"><Ico><path d="M1.500 2h5v4.500h-5zM9.500 2h5v4.500h-5zM1.500 9.500h5V14h-5zM9.500 9.500h5V14h-5z" stroke="#555" /></Ico></Cell>
      <Cell w="w-[40px]"><Ico><path d="M1.500 2h13v12h-13zM8 2v12M3 5h3M3 8h3M3 11h3M10 5h3M10 8h3M10 11h3" stroke="#555" /></Ico></Cell>
      <Cell w="w-[38px]"><Ico><path d="M1 2h14M2.500 2v8h11V2M8 10v3M5 14h6" stroke="#555" /></Ico></Cell>
      <div className="h-px bg-[#444] ml-[7px] w-[8px]" />
      <div className="relative w-[100px] h-px bg-[#444] ml-[6px]">
        <div className="absolute left-[48px] -top-[5px] w-[5px] h-[11px] bg-[#666]" />
      </div>
      <Ico s={9} vb="0 0 9 9" className="ml-[5px]"><path d="M0 4.500h9M4.500 0v9" stroke="#444" /></Ico>
      <span className="ml-[13px] w-[41px] text-[#555]">104%</span>
      <Ico s={13} className="mr-[7px] ml-[2px]"><path d="M.5.5h15v15H.5zM4 6V4h2M10 4h2v2M4 10v2h2M10 12h2v-2" stroke="#666" /></Ico>
    </div>
  </div>
)

export default function App() {
  return (
    <div className="relative w-[1920px] h-[1033px] overflow-hidden flex flex-col bg-[#e6e6e6] text-xs [font-family:'Noto_Sans','Noto_Sans_CJK_SC',sans-serif]">
      <RibbonTop />
      <Ribbon />
      <div className="flex-1 flex min-h-0">
        <Thumbnails />
        <Slide />
        <DesignPanel />
      </div>
      <StatusBar />
      <Watermark />
    </div>
  )
}
